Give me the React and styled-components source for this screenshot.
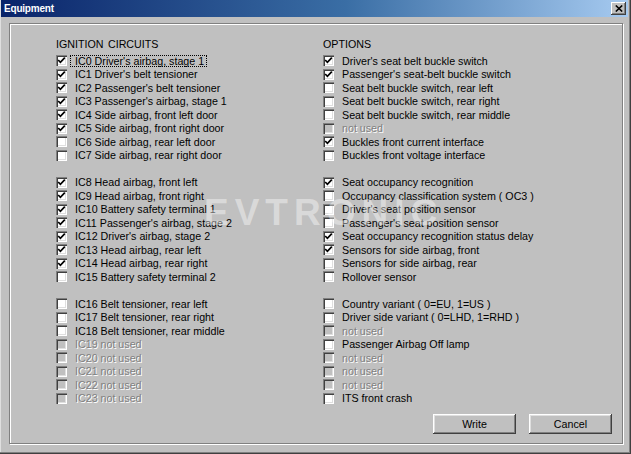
import React from "react";
import styled, { createGlobalStyle } from "styled-components";

const GlobalStyle = createGlobalStyle`
  html, body { margin: 0; padding: 0; background: #c0c0c0; }
  body { font-family: "Liberation Sans", Arial, sans-serif; }
`;

const Window = styled.div`
  position: relative;
  width: 631px;
  height: 454px;
  box-sizing: border-box;
  background: #c0c0c0;
  display: flex;
  flex-direction: column;
  padding: 0 3px 3px 1px;
  box-shadow: inset -1px -1px 0 #404040, inset -2px -2px 0 #808080, inset 1px 0 0 #dfdfdf;
  overflow: hidden;
`;

const TitleBar = styled.div`
  flex: none;
  height: 17px;
  background: linear-gradient(to right, #0a246a 0%, #3a6ea5 55%, #a6caf0 100%);
  display: flex;
  align-items: center;
  justify-content: space-between;
  padding: 0 2px 0 3px;
`;

const Title = styled.span`
  color: #fff;
  font-weight: 700;
  font-size: 10px;
  letter-spacing: -0.2px;
`;

const CloseButton = styled.div`
  width: 15px;
  height: 13px;
  box-sizing: border-box;
  background: #c0c0c0;
  display: flex;
  align-items: center;
  justify-content: center;
  box-shadow: inset -1px -1px 0 #404040, inset 1px 1px 0 #fff, inset -2px -2px 0 #808080;
`;

const Body = styled.div`
  flex: 1;
  display: flex;
  padding: 6px 5px 7px 8px;
`;

const GroupBox = styled.div`
  flex: 1;
  display: flex;
  flex-direction: column;
  border: 1px solid #808080;
  box-shadow: inset 1px 1px 0 #fff, 1px 1px 0 #fff;
  padding: 14px 10px 9px 46px;
`;

const Columns = styled.div`
  display: grid;
  grid-template-columns: 267px 1fr;
`;

const Column = styled.div`
  display: flex;
  flex-direction: column;
`;

const Header = styled.div`
  height: 13.5px;
  line-height: 13.5px;
  margin-bottom: 2.5px;
  font-size: 10.7px;
  word-spacing: 1.5px;
  color: #000;
`;

const Row = styled.div`
  height: 13.5px;
  display: flex;
  align-items: center;
`;

const Spacer = styled.div`
  height: 13.5px;
`;

const Box = styled.div`
  flex: none;
  width: 11px;
  height: 11px;
  box-sizing: border-box;
  background: ${(p) => (p.$disabled ? "#c0c0c0" : "#fff")};
  box-shadow: inset 1px 1px 0 #808080, inset 2px 2px 0 #404040,
    inset -1px -1px 0 #fff, inset -2px -2px 0 #dfdfdf;
  display: flex;
  align-items: center;
  justify-content: center;
`;

const Label = styled.span`
  margin-left: 3px;
  padding: 0 2px 0 4px;
  border: 1px dotted ${(p) => (p.$focus ? "#000" : "transparent")};
  font-size: 10.7px;
  line-height: 10px;
  white-space: pre;
  color: ${(p) => (p.$disabled ? "#808080" : "#000")};
  text-shadow: ${(p) => (p.$disabled ? "1px 1px 0 #fff" : "none")};
`;

const ButtonRow = styled.div`
  margin-top: auto;
  display: flex;
  justify-content: flex-end;
  gap: 13px;
`;

const Button = styled.div`
  width: 83px;
  height: 20px;
  box-sizing: border-box;
  display: flex;
  align-items: center;
  justify-content: center;
  font-size: 10.7px;
  color: #000;
  background: #c0c0c0;
  box-shadow: inset -1px -1px 0 #404040, inset 1px 1px 0 #fff,
    inset -2px -2px 0 #808080, inset 2px 2px 0 #dfdfdf;
`;

const Watermark = styled.div`
  position: absolute;
  left: 204px;
  top: 192px;
  font-size: 37px;
  font-weight: 700;
  letter-spacing: 6px;
  color: rgba(255, 255, 255, 0.42);
  pointer-events: none;
`;

const Check = () => (
  <svg width="9" height="9" viewBox="0 0 9 9">
    <path d="M1.2 4 L3.4 6.3 L7.8 1.6" fill="none" stroke="#000" strokeWidth="1.7" />
  </svg>
);

const CloseX = () => (
  <svg width="8" height="7" viewBox="0 0 8 7">
    <path d="M0.8 0.5 L7.2 6.5 M7.2 0.5 L0.8 6.5" stroke="#000" strokeWidth="1.6" />
  </svg>
);

const left = [
  ["IC0", "Driver's airbag, stage 1", 1, true],
  ["IC1", "Driver's belt tensioner", 1],
  ["IC2", "Passenger's belt tensioner", 1],
  ["IC3", "Passenger's airbag, stage 1", 1],
  ["IC4", "Side airbag, front left door", 1],
  ["IC5", "Side airbag, front right door", 1],
  ["IC6", "Side airbag, rear left door", 0],
  ["IC7", "Side airbag, rear right door", 0],
  null,
  ["IC8", "Head airbag, front left", 1],
  ["IC9", "Head airbag, front right", 1],
  ["IC10", "Battery safety terminal 1", 1],
  ["IC11", "Passenger's airbag, stage 2", 1],
  ["IC12", "Driver's airbag, stage 2", 1],
  ["IC13", "Head airbag, rear left", 1],
  ["IC14", "Head airbag, rear right", 1],
  ["IC15", "Battery safety terminal 2", 0],
  null,
  ["IC16", "Belt tensioner, rear left", 0],
  ["IC17", "Belt tensioner, rear right", 0],
  ["IC18", "Belt tensioner, rear middle", 0],
  ["IC19", "not used", "d"],
  ["IC20", "not used", "d"],
  ["IC21", "not used", "d"],
  ["IC22", "not used", "d"],
  ["IC23", "not used", "d"],
];

const right = [
  [null, "Driver's seat belt buckle switch", 1],
  [null, "Passenger's seat-belt buckle switch", 1],
  [null, "Seat belt buckle switch, rear left", 0],
  [null, "Seat belt buckle switch, rear right", 0],
  [null, "Seat belt buckle switch, rear middle", 0],
  [null, "not used", "d"],
  [null, "Buckles front current interface", 1],
  [null, "Buckles front voltage interface", 0],
  null,
  [null, "Seat occupancy recognition", 1],
  [null, "Occupancy classification system ( OC3 )", 0],
  [null, "Driver's seat position sensor", 0],
  [null, "Passenger's seat position sensor", 0],
  [null, "Seat occupancy recognition status delay", 1],
  [null, "Sensors for side airbag, front", 1],
  [null, "Sensors for side airbag, rear", 0],
  [null, "Rollover sensor", 0],
  null,
  [null, "Country variant ( 0=EU, 1=US )", 0],
  [null, "Driver side variant ( 0=LHD, 1=RHD )", 0],
  [null, "not used", "d"],
  [null, "Passenger Airbag Off lamp", 0],
  [null, "not used", "d"],
  [null, "not used", "d"],
  [null, "not used", "d"],
  [null, "ITS front crash", 0],
];

function Item({ item }) {
  if (!item) return <Spacer />;
  const [code, text, state, focus] = item;
  const disabled = state === "d";
  return (
    <Row>
      <Box $disabled={disabled}>{state === 1 && <Check />}</Box>
      <Label $disabled={disabled} $focus={focus}>
        {code ? `${code} ${text}` : text}
      </Label>
    </Row>
  );
}

export default function App() {
  return (
    <>
      <GlobalStyle />
      <Window>
        <TitleBar>
          <Title>Equipment</Title>
          <CloseButton>
            <CloseX />
          </CloseButton>
        </TitleBar>
        <Body>
          <GroupBox>
            <Columns>
              <Column>
                <Header>IGNITION CIRCUITS</Header>
                {left.map((it, i) => (
                  <Item key={i} item={it} />
                ))}
              </Column>
              <Column>
                <Header>OPTIONS</Header>
                {right.map((it, i) => (
                  <Item key={i} item={it} />
                ))}
              </Column>
            </Columns>
            <ButtonRow>
              <Button>Write</Button>
              <Button>Cancel</Button>
            </ButtonRow>
          </GroupBox>
        </Body>
        <Watermark>EVTRONIC</Watermark>
      </Window>
    </>
  );
}
